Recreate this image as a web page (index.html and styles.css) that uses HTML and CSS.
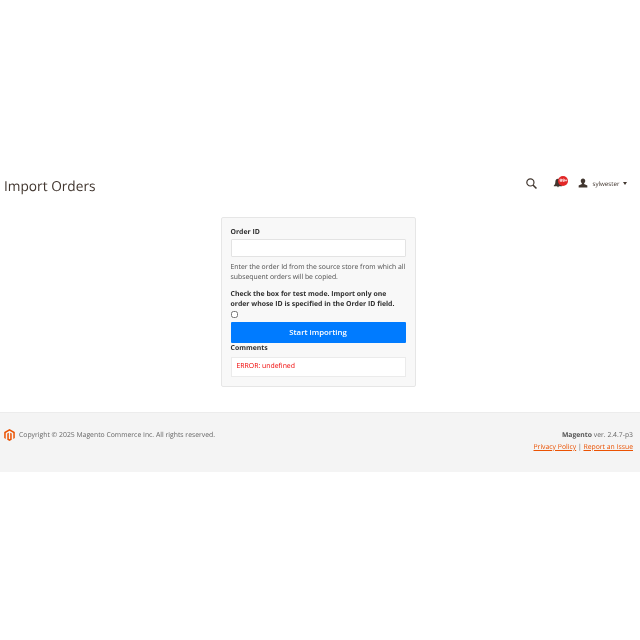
FILE: index.html
```html
<!DOCTYPE html>
<html lang="en">
<head>
<meta charset="utf-8">
<title>Import Orders</title>
<link rel="stylesheet" href="styles.css">
</head>
<body>
<div class="page">
  <header class="header">
    <h1 class="title">Import Orders</h1>
    <div class="actions">
      <svg class="search" viewBox="0 0 12 12" width="11" height="11"><circle cx="4.8" cy="4.8" r="3.9" fill="none" stroke="#41362f" stroke-width="1.3"/><path d="M7.6 7.6 11.4 11.400" stroke="#41362f" stroke-width="1.700"/></svg>
      <div class="bell">
        <svg viewBox="0 0 12 12" width="10" height="10"><path d="M6 1C3.600 1 2.800 3 2.800 5c0 2-.8 3-1.800 4v.8h10V9c-1-1-1.800-2-1.800-4S8.400 1 6 1zM4.700 10.300a1.400 1.400 0 0 0 2.600 0z" fill="#41362f"/></svg>
        <span class="badge">99+</span>
      </div>
      <div class="user">
        <svg viewBox="0 0 12 12" width="10" height="10"><path d="M6 .5c-1.700 0-2.700 1.200-2.700 2.900 0 1.300.6 2.500 1.400 3.100v.8L.8 9.100V11.500h10.400V9.100L7.300 7.300v-.8c.8-.6 1.400-1.800 1.400-3.100C8.700 1.700 7.700.5 6 .5z" fill="#41362f"/></svg>
        <span class="username">sylwester</span>
        <span class="caret"></span>
      </div>
    </div>
  </header>

  <main class="main">
    <form class="card">
      <label class="label" for="order-id">Order ID</label>
      <input class="input" id="order-id" type="text">
      <p class="hint">Enter the order Id from the source store from which all subsequent orders will be copied.</p>
      <label class="label label-test" for="test-mode">Check the box for test mode. Import only one order whose ID is specified in the Order ID field.</label>
      <input class="check" id="test-mode" type="checkbox">
      <button class="submit" type="button">Start importing</button>
      <div class="label label-comments">Comments</div>
      <div class="comments">ERROR: undefined</div>
    </form>
  </main>

  <footer class="footer">
    <div class="copyright">
      <svg class="logo" viewBox="0 0 12 13.600" width="11" height="12"><path d="M6 0 0 3.400v6.900l1.700 1V4.400L6 1.900l4.300 2.500v6.900l1.700-1V3.400z" fill="#eb5202"/><path d="M5.200 4.200 3.500 5.200v6.900l2.500 1.500 2.500-1.500V5.200l-1.700-1v6.900l-.8.500-.8-.5z" fill="#eb5202"/></svg>
      <span>Copyright © 2025 Magento Commerce Inc. All rights reserved.</span>
    </div>
    <div class="legal">
      <div><strong>Magento</strong> ver. 2.4.7-p3</div>
      <div class="links"><a href="#">Privacy Policy</a> | <a href="#">Report an Issue</a></div>
    </div>
  </footer>
</div>
</body>
</html>
```
FILE: styles.css
```css
* { box-sizing: border-box; }
html, body { margin: 0; padding: 0; background: #fff; }
body {
  font-family: "Open Sans", "Liberation Sans", sans-serif;
  color: #41362f;
  height: 640px;
  text-rendering: geometricPrecision;
}
.page { padding-top: 168px; will-change: transform; }
.header {
  display: flex;
  justify-content: space-between;
  align-items: flex-start;
  padding: 0 13px 0 4px;
  height: 49px;
}
.title {
  margin: 0;
  padding-top: 9px;
  font-size: 13.700px;
  line-height: 20px;
  font-weight: 400;
}
.actions { display: flex; align-items: center; height: 30px; }
.search { margin-right: 16px; }
.bell { display: flex; align-items: center; width: 25px; position: relative; }
.badge {
  position: absolute;
  left: 5px;
  top: -2px;
  width: 10px;
  height: 10px;
  border-radius: 50%;
  background: #e22626;
  color: #fff;
  font-size: 4.500px;
  font-weight: 700;
  line-height: 10px;
  text-align: center;
}
.user { display: flex; align-items: center; }
.username { font-size: 6.200px; margin-left: 4px; color: #41362f; }
.caret {
  margin-left: 3.500px;
  border: 2.500px solid transparent;
  border-top: 3px solid #41362f;
  border-bottom: 0;
}
.main { display: flex; justify-content: center; height: 195px; padding-right: 4px; }
.card {
  width: 195px;
  height: 170px;
  padding: 10px 9px 0;
  background: #f8f8f8;
  border: 1px solid #e6e6e6;
  border-radius: 2px;
}
.label {
  display: block;
  font-size: 6.900px;
  line-height: 10px;
  font-weight: 700;
  color: #303030;
}
.input {
  display: block;
  width: 100%;
  height: 18px;
  margin: 1px 0 0;
  background: #fff;
  border: 1px solid #e3e3e3;
  border-radius: 1px;
}
.hint {
  margin: 6px 0 0;
  font-size: 6.850px;
  line-height: 9.500px;
  color: #4d4d4d;
}
.label-test { margin-top: 8px; line-height: 9.500px; }
.check {
  display: block;
  width: 7px;
  height: 7px;
  margin: 1.500px 0 0;
}
.submit {
  display: block;
  width: 100%;
  height: 21px;
  margin-top: 4px;
  padding: 0;
  background: #007bff;
  border: 0;
  border-radius: 1px;
  color: #fff;
  font-family: inherit;
  font-size: 7.800px;
  font-weight: 600;
}
.label-comments { line-height: 9px; margin-top: 1px; }
.comments {
  height: 20px;
  margin-top: 4px;
  padding-left: 5px;
  background: #fff;
  border: 1px solid #ebebeb;
  font-size: 6.900px;
  font-weight: 500;
  line-height: 18px;
  color: #f00000;
}
.footer {
  display: flex;
  justify-content: space-between;
  height: 60px;
  padding: 17px 7px 0 4px;
  background: #f4f4f4;
  border-top: 1px solid #ececec;
  font-size: 6.830px;
  color: #666;
}
.copyright { display: flex; align-items: flex-start; gap: 4px; }
.copyright span { line-height: 11px; }
.logo { margin-top: -1px; }
.legal { text-align: right; line-height: 11px; }
.legal strong { color: #555; }
.links { margin-top: 1px; }
.links a { color: #eb5202; }
```
